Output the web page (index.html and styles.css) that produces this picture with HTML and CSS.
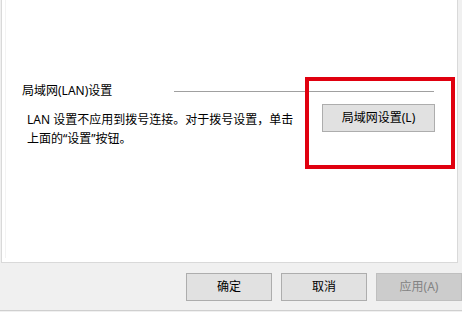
FILE: index.html
```html
<!DOCTYPE html>
<html lang="zh-CN">
<head>
<meta charset="utf-8">
<link rel="stylesheet" href="styles.css">
</head>
<body>
<div class="window">
  <div class="page">
    <div class="inner-edge"></div>
    <div class="group-head">
      <span class="group-title">局域网(LAN)设置</span>
      <span class="rule"></span>
    </div>
    <div class="group-body">
      <p class="desc">LAN 设置不应用到拨号连接。对于拨号设置，单击<br>上面的“设置”按钮。</p>
      <button class="btn lan-btn" type="button">局域网设置(L)</button>
    </div>
    <div class="highlight"></div>
  </div>
  <div class="footer">
    <button class="btn foot-btn" type="button">确定</button>
    <button class="btn foot-btn" type="button">取消</button>
    <button class="btn foot-btn disabled" type="button" disabled>应用(A)</button>
  </div>
  <div class="bottom-edge"></div>
</div>
</body>
</html>
```

FILE: styles.css
```css
html, body {
  margin: 0;
  padding: 0;
  background: #f0f0f0;
}

body {
  width: 462px;
  height: 312px;
  overflow: hidden;
  font-family: "Noto Sans", "Noto Sans CJK SC", sans-serif;
  font-size: 12px;
  color: #000;
}

.window {
  width: 462px;
  height: 312px;
}

.page {
  position: relative;
  margin-left: 1px;
  width: 455px;
  height: 262px;
  background: #fff;
  border-left: 1px solid #d9d9d9;
  border-right: 1px solid #d9d9d9;
  border-bottom: 1px solid #d9d9d9;
  display: flex;
  flex-direction: column;
}

.inner-edge {
  position: absolute;
  left: 3px;
  top: 0;
  bottom: 4px;
  width: 1px;
  background: #f3f3f3;
}

.group-head {
  display: flex;
  align-items: center;
  height: 16px;
  margin-top: 83px;
  padding-left: 20px;
}

.group-title {
  line-height: 16px;
  white-space: nowrap;
}

.rule {
  margin-left: auto;
  margin-right: 23px;
  flex: 0 0 260px;
  height: 1px;
  background: #a0a0a0;
}

.group-body {
  display: flex;
  align-items: flex-start;
  margin-top: 5px;
  padding-left: 25px;
}

.desc {
  margin: 0;
  padding-top: 6px;
  line-height: 19px;
  white-space: nowrap;
}

.btn {
  font-family: "Noto Sans", "Noto Sans CJK SC", sans-serif;
  font-size: 12px;
  color: #000;
  background: #e1e1e1;
  border: 1px solid #adadad;
  padding: 0;
  margin: 0;
  height: 28px;
  line-height: 26px;
  box-sizing: border-box;
}

.lan-btn {
  margin-left: auto;
  margin-right: 22px;
  width: 113px;
}

.highlight {
  position: absolute;
  left: 303px;
  top: 77px;
  width: 150px;
  height: 92px;
  box-sizing: border-box;
  border: 4px solid #e0000f;
}

.footer {
  display: flex;
  gap: 9px;
  padding-top: 10px;
  padding-left: 186px;
}

.foot-btn {
  width: 86px;
}

.foot-btn.disabled {
  background: #cccccc;
  border-color: #bfbfbf;
  color: #838383;
}

.bottom-edge {
  margin-top: 9px;
  height: 1px;
  background: #cfcfcf;
}
```
